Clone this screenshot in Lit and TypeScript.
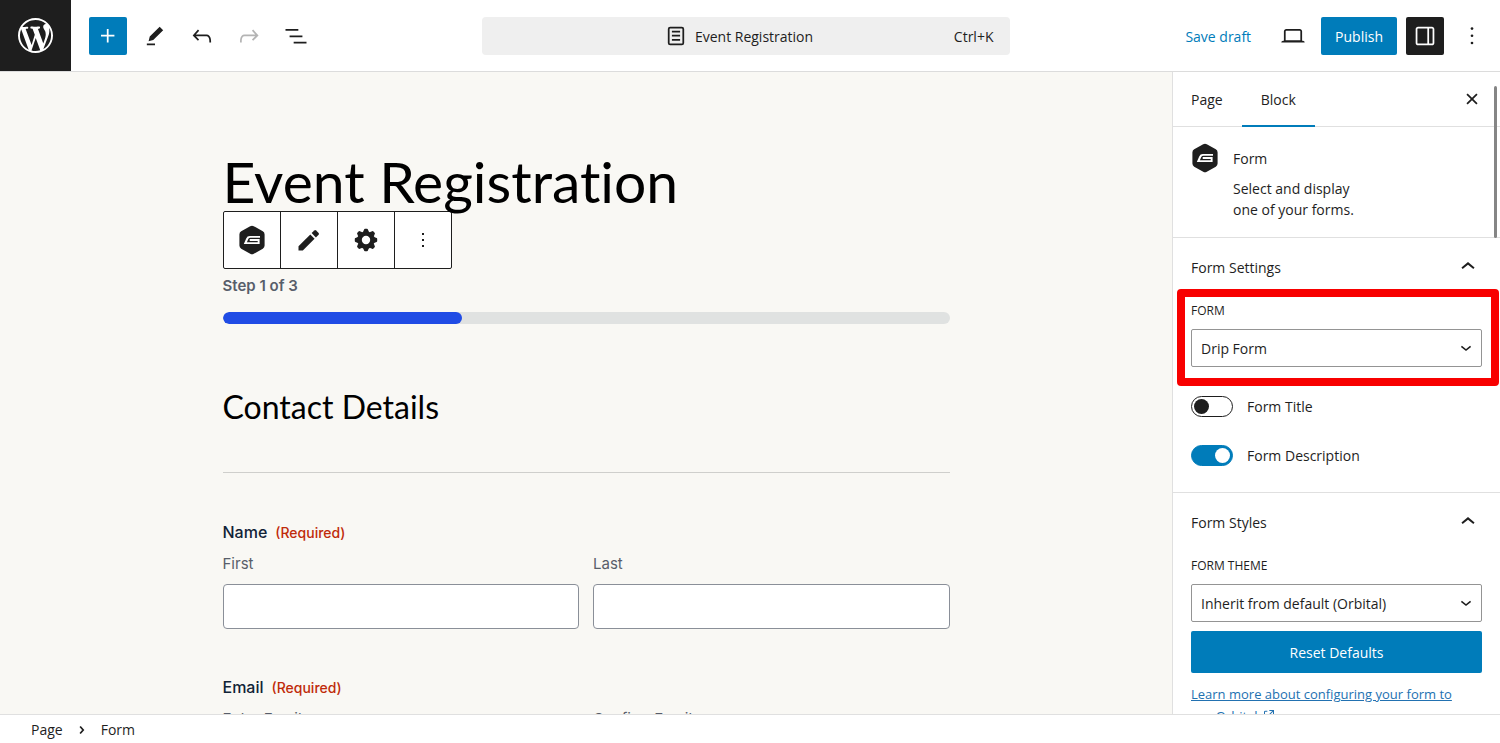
import { LitElement, html, css, svg } from "lit";
import { customElement, property, state } from "lit/decorators.js";

const ICONS: Record<string, { box?: string; body: unknown }> = {
  wordpress: {
    box: "0 0 20 20",
    body: svg`<path d="M20 10c0-5.51-4.49-10-10-10C4.48 0 0 4.49 0 10c0 5.52 4.48 10 10 10 5.51 0 10-4.48 10-10zM7.78 15.37L4.37 6.22c.55-.02 1.17-.08 1.17-.08.5-.06.44-1.13-.06-1.11 0 0-1.45.11-2.37.11-.18 0-.37 0-.58-.01C4.12 2.69 6.87 1.11 10 1.11c2.33 0 4.45.87 6.05 2.34-.68-.11-1.65.39-1.65 1.58 0 .74.45 1.36.9 2.1.35.61.55 1.36.55 2.46 0 1.49-1.4 5-1.4 5l-3.03-8.37c.54-.02.82-.17.82-.17.5-.05.44-1.25-.06-1.22 0 0-1.44.12-2.38.12-.87 0-2.33-.12-2.33-.12-.5-.03-.56 1.2-.06 1.22l.92.08 1.26 3.41zM17.41 10c.24-.64.74-1.87.43-4.25.7 1.29 1.05 2.71 1.05 4.25 0 3.29-1.73 6.24-4.4 7.78.97-2.59 1.94-5.2 2.92-7.78zM6.1 18.09C3.12 16.65 1.11 13.53 1.11 10c0-1.3.23-2.48.72-3.59C3.25 10.3 4.67 14.2 6.1 18.09zm4.03-6.63l2.58 6.98c-.86.29-1.76.45-2.71.45-.79 0-1.57-.11-2.29-.33.81-2.38 1.62-4.74 2.42-7.1z"/>`,
  },
  plus: { body: svg`<path d="M11 12.5V17.5H12.5V12.5H17.5V11H12.5V6H11V11H6V12.5H11Z"/>` },
  pen: { body: svg`<path d="m19 7-3-3-8.5 8.5-1 4 4-1L19 7Zm-7 11.5H5V20h7v-1.5Z"/>` },
  undo: { body: svg`<path d="M18.3 11.7c-.6-.6-1.4-.9-2.3-.9H6.7l2.9-3.3-1.1-1-4.5 5L8.5 16l1-1-2.7-2.7H16c.5 0 .9.2 1.3.5 1 1 1 3.4 1 4.5v.3h1.5v-.2c0-1.5 0-4.3-1.5-5.7z"/>` },
  redo: { body: svg`<path d="M15.6 6.5l-1.1 1 2.9 3.3H8c-.9 0-1.7.3-2.3.9-1.4 1.5-1.4 4.2-1.4 5.6v.2h1.5v-.3c0-1.1 0-3.5 1-4.5.3-.3.7-.5 1.3-.5h9.2L14.5 15l1.1 1.1 4.6-4.6-4.6-5z"/>` },
  list: { body: svg`<path d="M3 6h11v1.5H3V6Zm3.5 5.5h11V13h-11v-1.5ZM21 17H10v1.5h11V17Z"/>` },
  page: { body: svg`<path d="M15.5 7.5h-7V9h7V7.5Zm-7 3.5h7v1.5h-7V11Zm7 3.5h-7V16h7v-1.5Z"/><path d="M17 4H7a2 2 0 0 0-2 2v12a2 2 0 0 0 2 2h10a2 2 0 0 0 2-2V6a2 2 0 0 0-2-2ZM7 5.5h10a.5.5 0 0 1 .5.5v12a.5.5 0 0 1-.5.5H7a.5.5 0 0 1-.5-.5V6a.5.5 0 0 1 .5-.5Z"/>` },
  desktop: { body: svg`<path d="M20.5 16h-.7V8c0-1.1-.9-2-2-2H6.2c-1.1 0-2 .9-2 2v8h-.7c-.8 0-1.5.7-1.5 1.5h20c0-.8-.7-1.5-1.5-1.5zM5.7 8c0-.3.2-.5.5-.5h11.6c.3 0 .5.2.5.5v7.6H5.7V8z"/>` },
  drawer: { body: svg`<path d="M18 4H6c-1.1 0-2 .9-2 2v12c0 1.1.9 2 2 2h12c1.1 0 2-.9 2-2V6c0-1.1-.9-2-2-2zm-4 14.5H6c-.3 0-.5-.2-.5-.5V6c0-.3.2-.5.5-.5h8v13zm4.5-.5c0 .3-.2.5-.5.5h-2.5v-13H18c.3 0 .5.2.5.5v12z"/>` },
  more: { body: svg`<circle cx="12" cy="5.6" r="1.15"/><circle cx="12" cy="11.8" r="1.15"/><circle cx="12" cy="18" r="1.15"/>` },
  dots: { body: svg`<path d="M13 19h-2v-2h2v2zm0-6h-2v-2h2v2zm0-6h-2V5h2v2z"/>` },
  close: { body: svg`<path d="M12 13.06l3.712 3.713 1.061-1.06L13.061 12l3.712-3.712-1.06-1.06L12 10.938 8.288 7.227l-1.061 1.06L10.939 12l-3.712 3.712 1.06 1.061L12 13.061z"/>` },
  up: { body: svg`<path d="M6.9 13 12 8.9l5.1 4.1" fill="none" stroke="currentColor" stroke-width="1.7"/>` },
  down: { body: svg`<path d="m6.5 10 5.5 4.4 5.5-4.4" fill="none" stroke="currentColor" stroke-width="1.9"/>` },
  crumb: { body: svg`<path d="M9.2 6.8l4.6 5.2-4.6 5.2" fill="none" stroke="currentColor" stroke-width="2.6"/>` },
  external: { body: svg`<path d="M19.5 4.5h-7V6h4.44l-5.97 5.97 1.06 1.06L18 7.06v4.44h1.5v-7Zm-13 1a2 2 0 0 0-2 2v10a2 2 0 0 0 2 2h10a2 2 0 0 0 2-2v-3H17v3a.5.5 0 0 1-.5.5h-10a.5.5 0 0 1-.5-.5v-10a.5.5 0 0 1 .5-.5h3V5.5h-3Z"/>` },
  gravity: {
    box: "0 0 28 30",
    body: svg`<path d="M12.2 1.2a3.6 3.6 0 0 1 3.6 0l9 5.1a3.6 3.6 0 0 1 1.8 3.1v11.2a3.6 3.6 0 0 1-1.8 3.1l-9 5.1a3.6 3.6 0 0 1-3.6 0l-9-5.1a3.6 3.6 0 0 1-1.8-3.1V9.4a3.6 3.6 0 0 1 1.8-3.1z"/><path fill="#fff" d="M22 11v1.8h-9.6q-1.6 0-2.1 1.3l-1.4 3.2h10.8v-1.4h-8v-1.8h9.9v5H5.8l2.4-5.7q1-2.400 3.600-2.400z"/>`,
  },
  pencil: {
    box: "0 0 28 28",
    body: svg`<path d="M3.5 20.2 15.3 8.4l4.3 4.3L7.8 24.5H3.5z"/><path d="m16.6 7.1 2.7-2.7a1.3 1.3 0 0 1 1.8 0l2.5 2.5a1.3 1.3 0 0 1 0 1.8l-2.7 2.7z"/>`,
  },
  gear: {
    box: "-14 -14 28 28",
    body: svg`<circle r="6.5" fill="none" stroke="currentColor" stroke-width="4.6"/>${[0, 45, 90, 135, 180, 225, 270, 315].map(
      (a) => svg`<path transform=${`rotate(${a})`} d="M-3-8-1.9-10.6Q-1.7-11.2-1-11.2H1Q1.7-11.2 1.9-10.6L3-8z"/>`
    )}`,
  },
};

@customElement("ui-icon")
class UiIcon extends LitElement {
  @property() name = "";
  static styles = css`
    :host { display: block; width: 28px; height: 28px; flex: none; }
    svg { display: block; width: 100%; height: 100%; fill: currentColor; }
  `;
  render() {
    const icon = ICONS[this.name];
    return html`<svg viewBox=${icon.box ?? "0 0 24 24"} aria-hidden="true">${icon.body}</svg>`;
  }
}

@customElement("app-root")
class AppRoot extends LitElement {
  @state() progress = 33;

  static styles = css`
    :host {
      display: grid;
      grid-template-rows: auto minmax(0, 1fr) auto;
      height: 100vh;
      font: 14px/20px "Open Sans", "Noto Sans", sans-serif;
      color: #1e1e1e;
      background: #fff;
    }
    * { box-sizing: border-box; }
    button, select, input { font: inherit; color: inherit; margin: 0; }
    button { padding: 0; border: 0; background: none; display: flex; align-items: center; justify-content: center; }
    h1, h2, h3, p { margin: 0; font-weight: 400; }

    .topbar {
      display: grid;
      grid-template-columns: minmax(0, 1fr) minmax(0, 528px) minmax(0, 1fr);
      align-items: center;
      padding-right: 9px;
      border-bottom: 1px solid #dcdcdc;
    }
    .tools, .actions { display: flex; align-items: center; }
    .home { width: 71px; height: 71px; background: #1e1e1e; color: #fff; margin-right: 18px; }
    .home ui-icon { width: 35px; height: 35px; }
    .square { width: 38px; height: 38px; border-radius: 2px; }
    .tools .square + .square { margin-left: 9px; }
    .blue { background: #007cba; color: #fff; }
    .dark { background: #1e1e1e; color: #fff; }
    .faded { color: #b4b4b4; }
    .command {
      display: grid;
      grid-template-columns: 1fr auto 1fr;
      height: 38px;
      padding: 2px 16px 0 0;
      border-radius: 4px;
      background: #efefef;
    }
    .command .name { grid-column: 2; display: flex; align-items: center; gap: 5px; }
    .command ui-icon { margin-top: -2px; }
    .command .keys { justify-self: end; }
    .actions { justify-content: flex-end; gap: 9px; }
    .link { color: #007cba; margin-right: 14px; padding-top: 2px; }
    .publish { height: 38px; padding: 2px 14px 0; border-radius: 2px; }

    .body { display: grid; grid-template-columns: minmax(0, 1fr) 328px; min-height: 0; }
    .canvas { background: #f9f8f4; overflow: hidden; padding: 79px 24px 0; font-family: Inter, sans-serif; font-size: 15px; }
    .column { max-width: 727px; margin: 0 auto; }
    .title { position: relative; z-index: 1; font: 400 57px/60px Lato, sans-serif; font-variant-ligatures: none; color: #000; }
    .blocktools { display: inline-flex; border: 1px solid #1e1e1e; border-radius: 2px; background: #fff; vertical-align: top; }
    .blocktools button { width: 57px; height: 56px; }
    .blocktools button + button { border-left: 1px solid #1e1e1e; }
    .blocktools button:first-child { width: 56px; }
    .blocktools ui-icon { height: 30px; }
    .blocktools .small { width: 24px; }
    .step { margin-top: 7px; font-weight: 600; color: #585e6a; }
    .track { height: 12px; margin-top: 16px; border-radius: 6px; background: #e0e2e1; overflow: hidden; }
    .fill { height: 100%; border-radius: 6px; background: #204ce5; }
    .section { margin: 59px 0 48px; padding-bottom: 41px; border-bottom: 1px solid #cfcfcc; font: 400 32px/48px Lato, sans-serif; color: #000; }
    fieldset { border: 0; padding: 0; margin: 0 0 47px; min-width: 0; }
    legend { padding: 0; display: flex; align-items: baseline; gap: 8px; font-size: 16px; line-height: 22px; font-weight: 500; color: #112337; }
    .req { font-size: 14px; color: #c02b0a; }
    .pair { display: grid; grid-template-columns: 1fr 1fr; gap: 14px; margin-top: 10px; color: #585e6a; }
    .pair label { display: grid; gap: 10px; }
    .pair input { width: 100%; height: 45px; border: 1px solid #8a8f98; border-radius: 4px; background: #fff; padding: 0 12px; }

    .side { position: relative; border-left: 1px solid #e0e0e0; overflow: hidden; }
    .thumb { position: absolute; top: 14px; right: 3px; width: 3px; height: 152px; border-radius: 2px; background: #858585; }
    .tabs { display: flex; height: 55px; border-bottom: 1px solid #e0e0e0; padding-right: 14px; font-weight: 500; }
    .tab { padding: 0 19px 0 18px; margin-bottom: -1px; }
    .tab.on { border-bottom: 2px solid #007cba; padding: 2px 19px 0; }
    .tabs .x { margin-left: auto; }
    .card { display: grid; grid-template-columns: 28px 1fr; gap: 14px; padding: 16px 18px; height: 111px; border-bottom: 1px solid #e0e0e0; }
    .card ui-icon { height: 30px; }
    .card h2 { font-size: 14px; line-height: 21px; margin: 5px 0 9px; }
    .card p { line-height: 21px; max-width: 130px; }
    .panel { padding: 0 18px; }
    .panel + .panel { border-top: 1px solid #e0e0e0; }
    .panel .head { width: 100%; height: 57px; padding-top: 2px; justify-content: space-between; font-weight: 500; }
    .head ui-icon { margin-top: -2px; }
    .caption { display: block; font-size: 12px; line-height: 16px; margin: 8px 0 10px; text-transform: uppercase; }
    .field { position: relative; }
    .pick { display: grid; align-items: center; }
    .pick > * { grid-area: 1 / 1; }
    .pick ui-icon { justify-self: end; width: 20px; height: 20px; margin-right: 6px; pointer-events: none; }
    select { appearance: none; width: 100%; height: 38px; padding: 2px 9px 0; border: 1px solid #949494; border-radius: 2px; background: #fff; }
    .callout { position: absolute; inset: -14px -17px -19px -14px; border: 8px solid #f80000; border-radius: 4px; pointer-events: none; }
    .toggle { display: flex; align-items: center; gap: 14px; height: 22px; }
    .toggles { display: grid; gap: 27px; padding: 28px 0 26px; }
    .toggle input { appearance: none; width: 42px; height: 21px; border: 1px solid #1e1e1e; border-radius: 11px; padding: 2px; background: #fff; display: flex; align-items: center; }
    .toggle input::before { content: ""; width: 15px; height: 15px; border-radius: 50%; background: #1e1e1e; }
    .toggle input:checked { background: #007cba; border-color: #007cba; justify-content: flex-end; }
    .toggle input:checked::before { background: #fff; }
    .toggle span { padding-top: 1px; }
    .reset { width: 100%; height: 42px; margin: 9px 0 10px; padding-top: 2px; border-radius: 2px; }
    .more { display: block; padding-right: 18px; font-size: 13px; line-height: 22px; color: #2271b1; }
    .more ui-icon { display: inline-block; width: 16px; height: 16px; vertical-align: -2px; }

    .crumbs { display: flex; align-items: center; height: 29px; padding: 2px 31px 0; border-top: 1px solid #e0e0e0; gap: 11px; }
    .crumbs ui-icon { width: 16px; height: 16px; }
  `;

  tool(name: string, label: string, cls = "") {
    return html`<button class="square ${cls}" aria-label=${label}><ui-icon name=${name}></ui-icon></button>`;
  }

  picker(id: string, caption: string, value: string) {
    return html`<label class="caption" for=${id}>${caption}</label>
      <div class="pick"><select id=${id}><option>${value}</option></select><ui-icon name="down"></ui-icon></div>`;
  }

  fields(title: string, left: string, right: string) {
    return html`<fieldset>
      <legend>${title} <span class="req">(Required)</span></legend>
      <div class="pair">
        <label>${left}<input type="text" /></label>
        <label>${right}<input type="text" /></label>
      </div>
    </fieldset>`;
  }

  render() {
    return html`
      <header class="topbar">
        <div class="tools">
          <button class="home" aria-label="View Pages"><ui-icon name="wordpress"></ui-icon></button>
          ${this.tool("plus", "Add block", "blue")} ${this.tool("pen", "Tools")} ${this.tool("undo", "Undo")}
          ${this.tool("redo", "Redo", "faded")} ${this.tool("list", "Document Overview")}
        </div>
        <button class="command">
          <span class="name"><ui-icon name="page"></ui-icon>Event Registration</span>
          <span class="keys">Ctrl+K</span>
        </button>
        <div class="actions">
          <button class="link">Save draft</button>
          ${this.tool("desktop", "View")}
          <button class="publish blue">Publish</button>
          ${this.tool("drawer", "Settings", "dark")} ${this.tool("more", "Options")}
        </div>
      </header>
      <div class="body">
        <main class="canvas">
          <div class="column">
            <h1 class="title">Event Registration</h1>
            <div class="blocktools" role="toolbar" aria-label="Block tools">
              <button aria-label="Form"><ui-icon name="gravity"></ui-icon></button>
              <button aria-label="Edit Form"><ui-icon name="pencil"></ui-icon></button>
              <button aria-label="Form Settings"><ui-icon name="gear"></ui-icon></button>
              <button aria-label="Options"><ui-icon class="small" name="dots"></ui-icon></button>
            </div>
            <p class="step">Step 1 of 3</p>
            <div class="track"><div class="fill" style="width:${this.progress}%"></div></div>
            <h2 class="section">Contact Details</h2>
            ${this.fields("Name", "First", "Last")} ${this.fields("Email", "Enter Email", "Confirm Email")}
          </div>
        </main>
        <aside class="side">
          <div class="thumb"></div>
          <div class="tabs">
            <button class="tab">Page</button>
            <button class="tab on">Block</button>
            <button class="x" aria-label="Close Settings"><ui-icon name="close"></ui-icon></button>
          </div>
          <div class="card">
            <ui-icon name="gravity"></ui-icon>
            <div>
              <h2>Form</h2>
              <p>Select and display one of your forms.</p>
            </div>
          </div>
          <section class="panel">
            <button class="head">Form Settings<ui-icon name="up"></ui-icon></button>
            <div class="field">${this.picker("form", "Form", "Drip Form")}<div class="callout"></div></div>
            <div class="toggles">
              <label class="toggle"><input type="checkbox" role="switch" /><span>Form Title</span></label>
              <label class="toggle"><input type="checkbox" role="switch" checked /><span>Form Description</span></label>
            </div>
          </section>
          <section class="panel">
            <button class="head">Form Styles<ui-icon name="up"></ui-icon></button>
            <div class="field">${this.picker("theme", "Form Theme", "Inherit from default (Orbital)")}</div>
            <button class="reset blue">Reset Defaults</button>
            <a class="more" href="#">Learn more about configuring your form to use Orbital <ui-icon name="external"></ui-icon></a>
          </section>
        </aside>
      </div>
      <footer class="crumbs"><span>Page</span><ui-icon name="crumb"></ui-icon><span>Form</span></footer>
    `;
  }
}
